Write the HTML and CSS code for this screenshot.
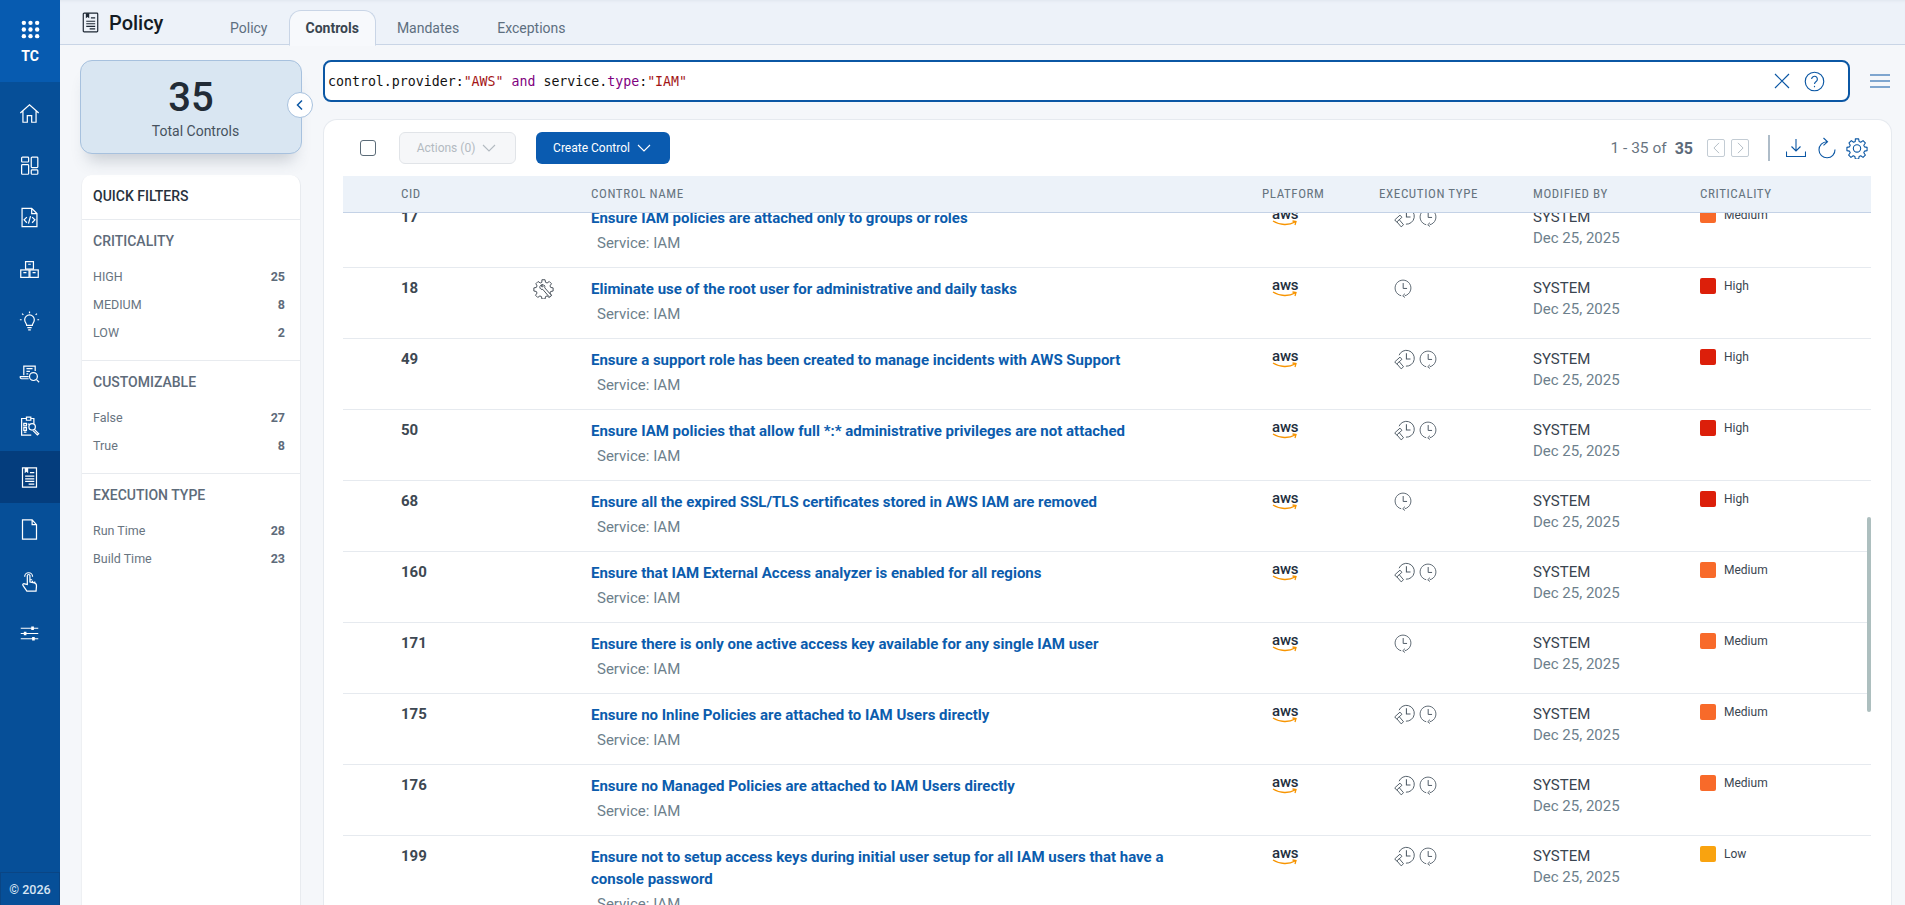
FILE: index.html
```html
<!DOCTYPE html>
<html lang="en">
<head>
    <meta charset="UTF-8">
    <title>Policy - Controls</title>
    <link rel="stylesheet" href="styles.css">
</head>
<body>
    <svg class="icon-defs" xmlns="http://www.w3.org/2000/svg">
        <symbol id="i-policy" viewBox="0 0 20 24">
            <path d="M2.500 1h15a1 1 0 0 1 1 1v20a1 1 0 0 1-1 1h-15a1 1 0 0 1-1-1V2a1 1 0 0 1 1-1z" fill="none" stroke="currentColor" stroke-width="1.400"/>
            <path d="M4.500 1h4v6l-2-1.600-2 1.600z" fill="currentColor"/>
            <path d="M10.500 6.500h5M5 10.500h10.500M5 13.500h10.500M5 16.500h10.500M9 19.500h6.500" fill="none" stroke="currentColor" stroke-width="1.300"/>
        </symbol>
        <symbol id="i-clock" viewBox="0 0 20 22">
            <path d="M8 19.600A8.800 8.800 0 1 1 12 19.600" fill="none" stroke="currentColor" stroke-width="1"/>
            <path d="M10.200 5.500v6h4.300" fill="none" stroke="currentColor" stroke-width="1.100"/>
            <path d="M12.200 17.300L9.700 19.600l2.500 2" fill="none" stroke="currentColor" stroke-width="1"/>
        </symbol>
        <symbol id="i-buildclock" viewBox="0 0 22 22">
            <path d="M5.300 6.500A8.300 8.300 0 1 1 12.500 18" fill="none" stroke="currentColor" stroke-width="1"/>
            <path d="M13 4.500v6h4.300" fill="none" stroke="currentColor" stroke-width="1.100"/>
            <path d="M.8 13.500L6.300 8.500l2 2.300-5.500 5zM5.500 13.300l4.500 5.300-2.500 2.200-4.500-5.300" fill="none" stroke="currentColor" stroke-width="1" stroke-linejoin="round"/>
        </symbol>
        <symbol id="i-gear" viewBox="0 0 24 24">
            <path d="M10.200 2h3.600l.5 2.900 1.800.8 2.500-1.700 2.500 2.500-1.700 2.500.8 1.800 2.800.5v3.600l-2.800.5-.8 1.800 1.700 2.500-2.500 2.500-2.500-1.700-1.800.8-.5 2.700h-3.600l-.5-2.700-1.800-.8-2.500 1.700-2.500-2.500 1.700-2.500-.8-1.800-2.800-.5v-3.600l2.800-.5.8-1.800L3.300 6.500l2.500-2.500 2.500 1.700 1.800-.8z" fill="none" stroke="currentColor" stroke-width="1.200" stroke-linejoin="round"/>
            <circle cx="12" cy="12.500" r="4" fill="none" stroke="currentColor" stroke-width="1.200"/>
        </symbol>
        <symbol id="i-geartool" viewBox="0 0 24 24">
            <path d="M10.200 2h3.600l.5 2.900 1.800.8 2.500-1.700 2.500 2.500-1.700 2.500.8 1.800 2.800.5v3.600l-2.800.5-.8 1.800 1.700 2.500-2.500 2.500-2.500-1.700-1.800.8-.5 2.700h-3.600l-.5-2.700-1.800-.8-2.500 1.700-2.500-2.500 1.700-2.500-.8-1.800-2.800-.5v-3.600l2.800-.5.8-1.800L3.300 6.500l2.500-2.500 2.500 1.700 1.800-.8z" fill="none" stroke="currentColor" stroke-width="1" stroke-linejoin="round"/>
            <path d="M11.800 7.800a3 3 0 0 0-3.900 3.700 3 3 0 0 0 3.300 1.500l6.800 8a1.500 1.500 0 0 0 2.300-2l-6.900-7.800a3 3 0 0 0-.5-2.900l-1.800 1.800-1.300-.3-.3-1.300z" fill="#fff" stroke="currentColor" stroke-width="1" stroke-linejoin="round"/>
        </symbol>
    </svg>

    <div class="app">
        <aside class="sidebar">
            <div class="brand">
                <svg class="brand-dots" viewBox="0 0 20 20"><g fill="currentColor"><circle cx="3" cy="3" r="2.300"/><circle cx="10" cy="3" r="2.300"/><circle cx="17" cy="3" r="2.300"/><circle cx="3" cy="10" r="2.300"/><circle cx="10" cy="10" r="2.300"/><circle cx="17" cy="10" r="2.300"/><circle cx="3" cy="17" r="2.300"/><circle cx="10" cy="17" r="2.300"/><circle cx="17" cy="17" r="2.300"/></g></svg>
                <div class="brand-name">TC</div>
            </div>
            <nav class="side-nav">
                <a class="nav-item"><svg viewBox="0 0 24 24"><path d="M1.500 11.500L12 2l10.500 9.500M4.500 9.500V22H9.500v-7.500h5V22h5V9.500"/></svg></a>
                <a class="nav-item"><svg viewBox="0 0 24 24"><rect x="3" y="2.500" width="8" height="5.500" rx="1"/><rect x="3" y="11" width="8" height="11" rx="1"/><rect x="14" y="2.500" width="7.500" height="12" rx="1"/><rect x="14" y="17" width="7.500" height="5" rx="1"/></svg></a>
                <a class="nav-item"><svg viewBox="0 0 24 24"><path d="M3.500 1.500h11l6 6v15h-17zM14.500 1.500v6h6M9 11.500l-3.200 3.200L9 18M15 11.500l3.200 3.200L15 18M13.200 10.500l-2.400 8.500"/></svg></a>
                <a class="nav-item"><svg viewBox="0 0 24 24"><rect x="7.500" y="3" width="9" height="8.500"/><rect x="2" y="12.500" width="9.500" height="8.500"/><rect x="12.500" y="12.500" width="9.500" height="8.500"/><path d="M10.500 6h3M5 15.500h3.500M15.500 15.500H19"/></svg></a>
                <a class="nav-item"><svg viewBox="0 0 24 24"><path d="M8.800 16.500c0-2.500-2.300-3.300-2.300-6.500a5.500 5.500 0 0 1 11 0c0 3.200-2.300 4-2.300 6.500zM9.500 19h5M10.500 21.500h3M12 .5v2M3.500 3l1.500 1.500M20.500 3L19 4.500M1 10h2M21 10h2"/></svg></a>
                <a class="nav-item"><svg viewBox="0 0 24 24"><path d="M5.500 14V3.500h13V9M8.500 6.500h7M8.500 9.500h4M8.500 12.500h2M11 18H3a1.800 1.800 0 0 1-1.500-2.500h9.500"/><circle cx="16.500" cy="15.500" r="4.500"/><path d="M20 19l3 3"/></svg></a>
                <a class="nav-item"><svg viewBox="0 0 24 24"><path d="M17 10V4h-3.500V2.500h-5V4H3v19h11M8.500 2.500h5V6h-5zM5.500 9.500h3v3h-3zM5.500 14.500h3v3h-3zM10 10.500h2M5.500 19.500h3"/><circle cx="15" cy="13.500" r="3.700"/><path d="M17.500 16.500l5 5-1.500 1.300-5-5"/></svg></a>
                <a class="nav-item active"><svg viewBox="0 0 20 24"><path d="M2 1h16v22H2z"/><path class="nav-fill" d="M4.500 1h4v6l-2-1.600-2 1.600z"/><path d="M10.500 6.500h5M5 10.500h10.500M5 13.500h10.500M5 16.500h10.500M9 19.500h6.500"/></svg></a>
                <a class="nav-item"><svg viewBox="0 0 20 24"><path d="M2 1h11l5 5.500V23H2zM13 1v5.500h5"/></svg></a>
                <a class="nav-item"><svg viewBox="0 0 24 24"><path d="M9.500 15.500V5.500a1.500 1.500 0 0 1 3 0v7l5 1c2 .5 2.500 1.500 2.500 3.500l-.5 6H9L4.500 16.500c-.8-1.200.8-2.800 2-1.700zM12.500 10h2.500M15.500 11v2.500M18 12v2M6.500 6.500a4.500 4.500 0 0 1 9 0"/></svg></a>
                <a class="nav-item"><svg viewBox="0 0 24 24"><path d="M2 6h20M2 12h20M2 18h20"/><path class="nav-fill" d="M14 4h3v4h-3zM5.500 10h3v4h-3zM15 16h3v4h-3z"/></svg></a>
            </nav>
            <div class="copyright">© 2026</div>
        </aside>

        <div class="main">
            <header class="topbar">
                <div class="page-title">
                    <svg class="title-icon"><use href="#i-policy"/></svg>
                    <h1>Policy</h1>
                </div>
                <div class="tabs">
                    <a class="tab tab-policy">Policy</a>
                    <a class="tab active">Controls</a>
                    <a class="tab tab-mandates">Mandates</a>
                    <a class="tab">Exceptions</a>
                </div>
            </header>

            <div class="workspace">
                <div class="left-panel">
                    <div class="summary-card">
                        <div class="summary-count">35</div>
                        <div class="summary-label">Total Controls</div>
                        <button class="collapse-btn"><svg viewBox="0 0 12 12"><path d="M8 1.500L3.500 6 8 10.500"/></svg></button>
                    </div>
                    <div class="filters">
                        <div class="filters-title">QUICK FILTERS</div>
                        <div class="filter-group">
                            <h3>CRITICALITY</h3>
                            <div class="filter-row"><span>HIGH</span><b>25</b></div>
                            <div class="filter-row"><span>MEDIUM</span><b>8</b></div>
                            <div class="filter-row"><span>LOW</span><b>2</b></div>
                        </div>
                        <div class="filter-group">
                            <h3>CUSTOMIZABLE</h3>
                            <div class="filter-row"><span>False</span><b>27</b></div>
                            <div class="filter-row"><span>True</span><b>8</b></div>
                        </div>
                        <div class="filter-group">
                            <h3>EXECUTION TYPE</h3>
                            <div class="filter-row"><span>Run Time</span><b>28</b></div>
                            <div class="filter-row"><span>Build Time</span><b>23</b></div>
                        </div>
                    </div>
                </div>

                <div class="right-panel">
                    <div class="search-row">
                        <div class="search-box">
                            <div class="query">control.provider:<span class="q-str">"AWS"</span> <span class="q-kw">and</span> service.<span class="q-kw">type</span>:<span class="q-str">"IAM"</span></div>
                            <svg class="search-clear" viewBox="0 0 16 16"><path d="M1 1l14 14M15 1L1 15"/></svg>
                            <svg class="search-help" viewBox="0 0 22 22"><circle cx="11" cy="11" r="9.700"/><path d="M8 8.500a3 3 0 1 1 4.700 2.500c-1.200.8-1.700 1.300-1.700 2.700"/><path d="M11 15.600v1.400"/></svg>
                        </div>
                        <svg class="menu-icon" viewBox="0 0 20 14"><path d="M0 1h20M0 7h20M0 13h20"/></svg>
                    </div>

                    <div class="card">
                        <div class="toolbar">
                            <span class="checkbox"></span>
                            <button class="btn btn-disabled">Actions (0) <svg viewBox="0 0 14 8"><path d="M1 1l6 6 6-6"/></svg></button>
                            <button class="btn btn-primary">Create Control <svg viewBox="0 0 14 8"><path d="M1 1l6 6 6-6"/></svg></button>
                            <div class="pager">
                                <span class="pager-text">1 - 35 of</span>
                                <b class="pager-total">35</b>
                                <span class="pager-btn"><svg viewBox="0 0 8 14"><path d="M7 1L1 7l6 6"/></svg></span>
                                <span class="pager-btn"><svg viewBox="0 0 8 14"><path d="M1 1l6 6-6 6"/></svg></span>
                                <span class="pager-sep"></span>
                                <svg class="tool-icon" viewBox="0 0 20 20"><path d="M10 1v12M5.500 8.500L10 13l4.500-4.500M.5 13.500v5h19v-5"/></svg>
                                <svg class="tool-icon tool-refresh" viewBox="0 0 20 22"><path d="M10 4.800A8 8 0 1 0 18 12.500M6.500 1l4 3.800-4 3.500"/></svg>
                                <svg class="tool-icon tool-gear"><use href="#i-gear"/></svg>
                            </div>
                        </div>

                        <div class="table-head grid-row">
                            <div>CID</div>
                            <div></div>
                            <div>CONTROL NAME</div>
                            <div>PLATFORM</div>
                            <div>EXECUTION TYPE</div>
                            <div>MODIFIED BY</div>
                            <div>CRITICALITY</div>
                        </div>

                        <div class="table-body">
                            <div class="grid-row table-row first-row">
                                <div class="cid">17</div>
                                <div></div>
                                <div class="name"><a>Ensure IAM policies are attached only to groups or roles</a><span>Service: IAM</span></div>
                                <div class="aws"><span>aws</span><svg viewBox="0 0 26 6"><path d="M1 1c7 4.500 16 4.500 22 1M20.500 1l3.500.5-1 3.500"/></svg></div>
                                <div class="exec"><svg class="ic-build"><use href="#i-buildclock"/></svg><svg class="ic-clock"><use href="#i-clock"/></svg></div>
                                <div class="modified">SYSTEM<small>Dec 25, 2025</small></div>
                                <div class="crit"><i class="sq medium"></i>Medium</div>
                            </div>
                            <div class="grid-row table-row">
                                <div class="cid">18</div>
                                <div class="row-gear"><svg><use href="#i-geartool"/></svg></div>
                                <div class="name"><a>Eliminate use of the root user for administrative and daily tasks</a><span>Service: IAM</span></div>
                                <div class="aws"><span>aws</span><svg viewBox="0 0 26 6"><path d="M1 1c7 4.500 16 4.500 22 1M20.500 1l3.500.5-1 3.500"/></svg></div>
                                <div class="exec"><svg class="ic-clock"><use href="#i-clock"/></svg></div>
                                <div class="modified">SYSTEM<small>Dec 25, 2025</small></div>
                                <div class="crit"><i class="sq high"></i>High</div>
                            </div>
                            <div class="grid-row table-row">
                                <div class="cid">49</div>
                                <div></div>
                                <div class="name"><a>Ensure a support role has been created to manage incidents with AWS Support</a><span>Service: IAM</span></div>
                                <div class="aws"><span>aws</span><svg viewBox="0 0 26 6"><path d="M1 1c7 4.500 16 4.500 22 1M20.500 1l3.500.5-1 3.500"/></svg></div>
                                <div class="exec"><svg class="ic-build"><use href="#i-buildclock"/></svg><svg class="ic-clock"><use href="#i-clock"/></svg></div>
                                <div class="modified">SYSTEM<small>Dec 25, 2025</small></div>
                                <div class="crit"><i class="sq high"></i>High</div>
                            </div>
                            <div class="grid-row table-row">
                                <div class="cid">50</div>
                                <div></div>
                                <div class="name"><a>Ensure IAM policies that allow full *:* administrative privileges are not attached</a><span>Service: IAM</span></div>
                                <div class="aws"><span>aws</span><svg viewBox="0 0 26 6"><path d="M1 1c7 4.500 16 4.500 22 1M20.500 1l3.500.5-1 3.500"/></svg></div>
                                <div class="exec"><svg class="ic-build"><use href="#i-buildclock"/></svg><svg class="ic-clock"><use href="#i-clock"/></svg></div>
                                <div class="modified">SYSTEM<small>Dec 25, 2025</small></div>
                                <div class="crit"><i class="sq high"></i>High</div>
                            </div>
                            <div class="grid-row table-row">
                                <div class="cid">68</div>
                                <div></div>
                                <div class="name"><a>Ensure all the expired SSL/TLS certificates stored in AWS IAM are removed</a><span>Service: IAM</span></div>
                                <div class="aws"><span>aws</span><svg viewBox="0 0 26 6"><path d="M1 1c7 4.500 16 4.500 22 1M20.500 1l3.500.5-1 3.500"/></svg></div>
                                <div class="exec"><svg class="ic-clock"><use href="#i-clock"/></svg></div>
                                <div class="modified">SYSTEM<small>Dec 25, 2025</small></div>
                                <div class="crit"><i class="sq high"></i>High</div>
                            </div>
                            <div class="grid-row table-row">
                                <div class="cid">160</div>
                                <div></div>
                                <div class="name"><a>Ensure that IAM External Access analyzer is enabled for all regions</a><span>Service: IAM</span></div>
                                <div class="aws"><span>aws</span><svg viewBox="0 0 26 6"><path d="M1 1c7 4.500 16 4.500 22 1M20.500 1l3.500.5-1 3.500"/></svg></div>
                                <div class="exec"><svg class="ic-build"><use href="#i-buildclock"/></svg><svg class="ic-clock"><use href="#i-clock"/></svg></div>
                                <div class="modified">SYSTEM<small>Dec 25, 2025</small></div>
                                <div class="crit"><i class="sq medium"></i>Medium</div>
                            </div>
                            <div class="grid-row table-row">
                                <div class="cid">171</div>
                                <div></div>
                                <div class="name"><a>Ensure there is only one active access key available for any single IAM user</a><span>Service: IAM</span></div>
                                <div class="aws"><span>aws</span><svg viewBox="0 0 26 6"><path d="M1 1c7 4.500 16 4.500 22 1M20.500 1l3.500.5-1 3.500"/></svg></div>
                                <div class="exec"><svg class="ic-clock"><use href="#i-clock"/></svg></div>
                                <div class="modified">SYSTEM<small>Dec 25, 2025</small></div>
                                <div class="crit"><i class="sq medium"></i>Medium</div>
                            </div>
                            <div class="grid-row table-row">
                                <div class="cid">175</div>
                                <div></div>
                                <div class="name"><a>Ensure no Inline Policies are attached to IAM Users directly</a><span>Service: IAM</span></div>
                                <div class="aws"><span>aws</span><svg viewBox="0 0 26 6"><path d="M1 1c7 4.500 16 4.500 22 1M20.500 1l3.500.5-1 3.500"/></svg></div>
                                <div class="exec"><svg class="ic-build"><use href="#i-buildclock"/></svg><svg class="ic-clock"><use href="#i-clock"/></svg></div>
                                <div class="modified">SYSTEM<small>Dec 25, 2025</small></div>
                                <div class="crit"><i class="sq medium"></i>Medium</div>
                            </div>
                            <div class="grid-row table-row">
                                <div class="cid">176</div>
                                <div></div>
                                <div class="name"><a>Ensure no Managed Policies are attached to IAM Users directly</a><span>Service: IAM</span></div>
                                <div class="aws"><span>aws</span><svg viewBox="0 0 26 6"><path d="M1 1c7 4.500 16 4.500 22 1M20.500 1l3.500.5-1 3.500"/></svg></div>
                                <div class="exec"><svg class="ic-build"><use href="#i-buildclock"/></svg><svg class="ic-clock"><use href="#i-clock"/></svg></div>
                                <div class="modified">SYSTEM<small>Dec 25, 2025</small></div>
                                <div class="crit"><i class="sq medium"></i>Medium</div>
                            </div>
                            <div class="grid-row table-row">
                                <div class="cid">199</div>
                                <div></div>
                                <div class="name"><a>Ensure not to setup access keys during initial user setup for all IAM users that have a console password</a><span>Service: IAM</span></div>
                                <div class="aws"><span>aws</span><svg viewBox="0 0 26 6"><path d="M1 1c7 4.500 16 4.500 22 1M20.500 1l3.500.5-1 3.500"/></svg></div>
                                <div class="exec"><svg class="ic-build"><use href="#i-buildclock"/></svg><svg class="ic-clock"><use href="#i-clock"/></svg></div>
                                <div class="modified">SYSTEM<small>Dec 25, 2025</small></div>
                                <div class="crit"><i class="sq low"></i>Low</div>
                            </div>
                        </div>
                        <div class="scroll-thumb"></div>
                    </div>
                </div>
            </div>
        </div>
    </div>
</body>
</html>
```

FILE: styles.css
```css
* {
    margin: 0;
    padding: 0;
    box-sizing: border-box;
}

html, body {
    height: 100%;
    overflow: hidden;
}

body {
    font-family: Roboto, "Liberation Sans", sans-serif;
    font-size: 14px;
    color: #3a4550;
    background: #f5f7fa;
}

.icon-defs {
    display: none;
}

.app {
    display: flex;
    height: 905px;
}

/* sidebar */
.sidebar {
    width: 60px;
    flex: none;
    display: flex;
    flex-direction: column;
    background: #064f98;
    color: #fff;
}

.brand {
    height: 82px;
    padding-top: 20px;
    display: flex;
    flex-direction: column;
    align-items: center;
    background: #075bb0;
}

.brand-dots {
    width: 19px;
    height: 19px;
    color: #fff;
}

.brand-name {
    font-size: 14px;
    font-weight: 700;
    margin-top: 9px;
}

.side-nav {
    flex: 1;
    padding-top: 5px;
}

.nav-item {
    height: 52px;
    display: flex;
    align-items: center;
    justify-content: center;
}

.nav-item svg {
    width: 21px;
    height: 21px;
    margin-left: -2px;
    fill: none;
    stroke: #fff;
    stroke-width: 1.400;
}

.nav-item .nav-fill {
    fill: #fff;
    stroke: none;
}

.nav-item.active {
    background: #043d7d;
}

.copyright {
    height: 33px;
    display: flex;
    align-items: center;
    justify-content: center;
    font-size: 12.500px;
    font-weight: 500;
    color: #d7e5f3;
    border: 1px solid #0a4584;
    border-bottom: none;
}

/* top bar */
.main {
    flex: 1;
    min-width: 0;
    display: flex;
    flex-direction: column;
}

.topbar {
    height: 45px;
    flex: none;
    display: flex;
    background: #edf2f9;
    border-bottom: 1px solid #c9d5e6;
    box-shadow: inset 0 3px 3px -2px #dfe5ee;
}

.page-title {
    display: flex;
    align-items: flex-start;
    padding: 12px 0 0 22px;
    width: 170px;
    flex: none;
}

.title-icon {
    width: 17px;
    height: 21px;
    color: #1d2733;
}

.page-title h1 {
    font-size: 20px;
    font-weight: 500;
    line-height: 22px;
    color: #141b24;
    margin-left: 10px;
}

.tabs {
    display: flex;
    align-items: flex-end;
    height: 45px;
}

.tab {
    height: 36px;
    margin-bottom: -1px;
    padding: 0 19px;
    display: flex;
    align-items: center;
    font-size: 14px;
    color: #5d6f80;
}

.tab-policy {
    padding: 0 21px 0 0;
}

.tab-mandates {
    padding-left: 21px;
}

.tab.active {
    background: #f7f9fc;
    border: 1px solid #c9d5e6;
    border-bottom-color: #f7f9fc;
    border-radius: 12px 12px 0 0;
    padding: 0 16px;
    font-weight: 700;
    color: #3a4550;
}

/* left column */
.workspace {
    flex: 1;
    min-height: 0;
    display: flex;
    padding: 15px 13px 0 20px;
}

.left-panel {
    width: 222px;
    flex: none;
    display: flex;
    flex-direction: column;
    gap: 21px;
}

.summary-card {
    position: relative;
    height: 94px;
    flex: none;
    padding-top: 17px;
    background: #d9e6f2;
    border: 1px solid #a7c1de;
    border-radius: 12px;
    box-shadow: 0 14px 16px -8px rgba(60, 75, 95, 0.25);
    text-align: center;
}

.summary-count {
    font-size: 40px;
    font-weight: 500;
    line-height: 40px;
    color: #212b36;
}

.summary-label {
    font-size: 14px;
    line-height: 18px;
    margin-top: 4px;
    color: #46525e;
    margin-left: 9px;
}

.collapse-btn {
    position: absolute;
    top: 31px;
    right: -12px;
    width: 26px;
    height: 26px;
    border-radius: 50%;
    border: 1px solid #a7c1de;
    background: #fff;
    display: flex;
    align-items: center;
    justify-content: center;
}

.collapse-btn svg {
    width: 12px;
    height: 12px;
    fill: none;
    stroke: #0b57a4;
    stroke-width: 1.500;
}

.filters {
    flex: 1;
    margin: 0 1px;
    background: #fff;
    border-radius: 10px 10px 0 0;
    border-right: 1px solid #e8ebef;
    border-left: 1px solid #eef0f3;
}

.filters-title {
    height: 45px;
    padding: 0 11px 2px;
    display: flex;
    align-items: center;
    font-size: 14px;
    font-weight: 500;
    color: #27313c;
    border-bottom: 1px solid #e8ebef;
}

.filter-group {
    padding: 10px 15px 14px 11px;
    border-bottom: 1px solid #e8ebef;
}

.filter-group:last-child {
    border-bottom: none;
}

.filter-group h3 {
    font-size: 14px;
    font-weight: 500;
    line-height: 22px;
    margin-bottom: 10px;
    color: #5e6b7a;
}

.filter-row {
    height: 28px;
    display: flex;
    align-items: center;
    justify-content: space-between;
    font-size: 12.500px;
    color: #68747f;
}

.filter-row b {
    font-weight: 700;
    color: #5e6b7a;
}

/* search */
.right-panel {
    flex: 1;
    min-width: 0;
    margin-left: 21px;
    display: flex;
    flex-direction: column;
}

.search-row {
    height: 59px;
    flex: none;
    display: flex;
    align-items: flex-start;
}

.search-box {
    width: 1527px;
    height: 42px;
    flex: none;
    display: flex;
    align-items: center;
    padding: 0 23px 0 3px;
    background: #fff;
    border: 2px solid #0b57a4;
    border-radius: 8px;
}

.query {
    flex: 1;
    font-family: "DejaVu Sans Mono", "Liberation Mono", monospace;
    font-size: 13.250px;
    color: #111;
}

.q-str {
    color: #a31515;
}

.q-kw {
    color: #800080;
}

.search-clear {
    width: 16px;
    height: 16px;
    fill: none;
    stroke: #0b57a4;
    stroke-width: 1.200;
    margin-right: 14px;
}

.search-help {
    width: 21px;
    height: 21px;
    fill: none;
    stroke: #0b57a4;
    stroke-width: 1.200;
}

.menu-icon {
    width: 20px;
    height: 14px;
    margin: 14px 0 0 20px;
    fill: none;
    stroke: #0b57a4;
    stroke-width: 1.100;
}

/* table card */
.card {
    position: relative;
    flex: 1;
    min-height: 0;
    overflow: hidden;
    display: flex;
    flex-direction: column;
    padding: 0 20px 0 19px;
    background: #fff;
    border: 1px solid #e6eaef;
    border-bottom: none;
    border-radius: 14px 14px 0 0;
    width: 1569px;
}

.toolbar {
    height: 56px;
    flex: none;
    display: flex;
    align-items: center;
}

.checkbox {
    width: 16px;
    height: 16px;
    margin-left: 17px;
    border: 1px solid #5b6b78;
    border-radius: 3px;
}

.btn {
    height: 32px;
    display: flex;
    align-items: center;
    justify-content: center;
    gap: 7px;
    padding-right: 2px;
    font-family: inherit;
    font-size: 12px;
    border-radius: 6px;
}

.btn svg {
    width: 14px;
    height: 8px;
    fill: none;
    stroke: currentColor;
    stroke-width: 1.100;
}

.btn-disabled {
    width: 117px;
    margin-left: 23px;
    color: #b3bac1;
    background: #f6f7f9;
    border: 1px solid #e1e4e8;
}

.btn-primary {
    width: 134px;
    margin-left: 20px;
    color: #fff;
    background: #0a5bb0;
    border: none;
}

.pager {
    margin-left: auto;
    display: flex;
    align-items: center;
    padding-right: 3px;
}

.pager-text {
    font-size: 15.500px;
    color: #68747f;
}

.pager-total {
    font-size: 16px;
    color: #5e6b7a;
    margin-left: 8px;
}

.pager-btn {
    width: 18px;
    height: 18px;
    margin-left: 6px;
    display: flex;
    align-items: center;
    justify-content: center;
    border: 1px solid #c3ccd4;
    border-radius: 2px;
}

.pager-total + .pager-btn {
    margin-left: 14px;
}

.pager-btn svg {
    width: 7px;
    height: 12px;
    fill: none;
    stroke: #a9b4bd;
    stroke-width: 1;
}

.pager-sep {
    width: 2px;
    height: 26px;
    margin: 0 16px 0 19px;
    background: #aebcc8;
}

.tool-icon {
    width: 20px;
    height: 20px;
    fill: none;
    stroke: #0b57a4;
    stroke-width: 1.100;
    color: #0b57a4;
}

.tool-refresh {
    height: 22px;
    margin-left: 11px;
}

.tool-gear {
    width: 22px;
    height: 22px;
    margin-left: 9px;
    stroke: none;
}

.grid-row {
    display: grid;
    grid-template-columns: 132px 58px 671px 117px 154px 167px 171px;
    padding-left: 58px;
}

.table-head {
    height: 37px;
    flex: none;
    align-items: center;
    padding-bottom: 2px;
    background: #ecf2f9;
    border-bottom: 1px solid #c4d2e6;
    font-size: 13px;
    font-stretch: 75%;
    color: #66747f;
    letter-spacing: 0.600px;
    position: relative;
    z-index: 1;
}

.table-body {
    flex: 1;
    min-height: 0;
    overflow: hidden;
}

.table-row {
    height: 71px;
    border-bottom: 1px solid #e6eaef;
    padding-top: 10px;
}

.table-row:last-child {
    height: auto;
    border-bottom: none;
}

.first-row {
    margin-top: -16px;
}

.cid {
    font-size: 15px;
    font-weight: 700;
    line-height: 20px;
    color: #3d4852;
}

.row-gear svg {
    width: 21px;
    height: 21px;
    color: #333d47;
}

.name {
    font-size: 15px;
    line-height: 22px;
    width: 590px;
}

.name a {
    display: block;
    font-weight: 700;
    color: #0b5cad;
}

.name span {
    display: block;
    margin: 3px 0 0 6px;
    color: #6d7f8c;
}

.aws {
    margin: 1px 0 0 10px;
    width: 27px;
    display: flex;
    flex-direction: column;
}

.aws span {
    font-size: 15px;
    font-weight: 500;
    line-height: 13px;
    height: 12px;
    color: #232f3e;
    letter-spacing: -0.200px;
}

.aws svg {
    width: 26px;
    height: 6px;
    fill: none;
    stroke: #f79400;
    stroke-width: 1.300;
}

.exec {
    display: flex;
    gap: 4px;
    margin-left: 15px;
    color: #4f5b66;
}

.ic-clock {
    width: 18px;
    height: 20px;
}

.ic-build {
    width: 21px;
    height: 21px;
}

.modified {
    font-size: 15px;
    line-height: 21px;
}

.modified small {
    display: block;
    font-size: 15px;
    color: #6d7f8c;
}

.crit {
    display: flex;
    align-items: flex-start;
    font-size: 12px;
    line-height: 16px;
    color: #3a4550;
}

.sq {
    width: 16px;
    height: 16px;
    margin-right: 8px;
    border-radius: 2px;
}

.sq.high {
    background: #dc1f0a;
}

.sq.medium {
    background: #f86a2a;
}

.sq.low {
    background: #f9a30f;
}

.scroll-thumb {
    position: absolute;
    top: 397px;
    right: 20px;
    width: 4px;
    height: 195px;
    border-radius: 2px;
    background: #adbfbf;
}
```
